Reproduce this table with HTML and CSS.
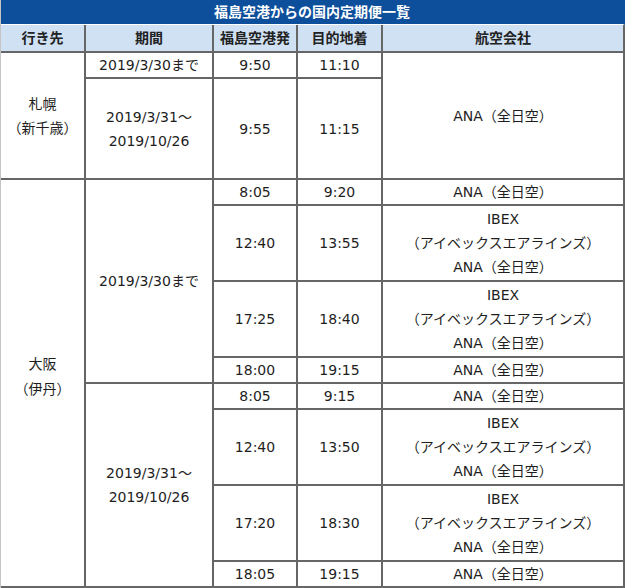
FILE: index.html
```html
<!DOCTYPE html>
<html lang="ja">
<head>
<meta charset="utf-8">
<title>福島空港からの国内定期便一覧</title>
<link rel="stylesheet" href="styles.css">
</head>
<body>
<table class="flights">
  <colgroup>
    <col class="c-dest">
    <col class="c-period">
    <col class="c-dep">
    <col class="c-arr">
    <col class="c-air">
  </colgroup>
  <tr class="r-title"><th colspan="5" class="title">福島空港からの国内定期便一覧</th></tr>
  <tr class="r-head">
    <th>行き先</th><th>期間</th><th>福島空港発</th><th>目的地着</th><th>航空会社</th>
  </tr>
  <tr class="h26">
    <td rowspan="2">札幌<br>（新千歳）</td>
    <td>2019/3/30まで</td><td>9:50</td><td>11:10</td>
    <td rowspan="2">ANA（全日空）</td>
  </tr>
  <tr class="h101">
    <td>2019/3/31～<br>2019/10/26</td><td>9:55</td><td>11:15</td>
  </tr>
  <tr class="h26">
    <td rowspan="8" class="osaka">大阪<br>（伊丹）</td>
    <td rowspan="4">2019/3/30まで</td>
    <td>8:05</td><td>9:20</td><td>ANA（全日空）</td>
  </tr>
  <tr class="h76">
    <td>12:40</td><td>13:55</td><td>IBEX<br>（アイベックスエアラインズ）<br>ANA（全日空）</td>
  </tr>
  <tr class="h76">
    <td>17:25</td><td>18:40</td><td>IBEX<br>（アイベックスエアラインズ）<br>ANA（全日空）</td>
  </tr>
  <tr class="h26">
    <td>18:00</td><td>19:15</td><td>ANA（全日空）</td>
  </tr>
  <tr class="h26">
    <td rowspan="4">2019/3/31～<br>2019/10/26</td>
    <td>8:05</td><td>9:15</td><td>ANA（全日空）</td>
  </tr>
  <tr class="h76">
    <td>12:40</td><td>13:50</td><td>IBEX<br>（アイベックスエアラインズ）<br>ANA（全日空）</td>
  </tr>
  <tr class="h76">
    <td>17:20</td><td>18:30</td><td>IBEX<br>（アイベックスエアラインズ）<br>ANA（全日空）</td>
  </tr>
  <tr class="h25">
    <td>18:05</td><td>19:15</td><td>ANA（全日空）</td>
  </tr>
</table>
</body>
</html>
```

FILE: styles.css
```css
html, body {
  margin: 0;
  padding: 0;
  background: #ffffff;
}

.flights {
  border-collapse: separate;
  border-spacing: 0;
  table-layout: fixed;
  width: 625px;
  border-left: 1px solid #c4c4c4;
  font-family: "DejaVu Sans", "Noto Sans CJK JP", sans-serif;
  font-size: 14px;
  color: #1e1e1e;
}

.c-dest { width: 85px; }
.c-period { width: 128px; }
.c-dep { width: 84px; }
.c-arr { width: 85px; }
.c-air { width: 242px; }

.flights td,
.flights th {
  box-sizing: border-box;
  padding: 0;
  text-align: center;
  vertical-align: middle;
  line-height: 24px;
  border-right: 2px solid #666666;
  border-bottom: 2px solid #666666;
}

.r-title { height: 25px; }

.flights th.title {
  background: #0e4f9b;
  color: #ffffff;
  font-weight: bold;
  line-height: 24px;
  border-right: 2px solid #0e4f9b;
  border-bottom: 1px solid #ffffff;
}

.r-head { height: 28px; }

.r-head th {
  background: #cfe1f3;
  color: #222222;
  font-weight: bold;
}

.h25 { height: 25px; }
.h26 { height: 26px; }
.h76 { height: 76px; }
.h101 { height: 101px; }

.flights td.osaka {
  line-height: 25px;
  padding-bottom: 12px;
}
```
